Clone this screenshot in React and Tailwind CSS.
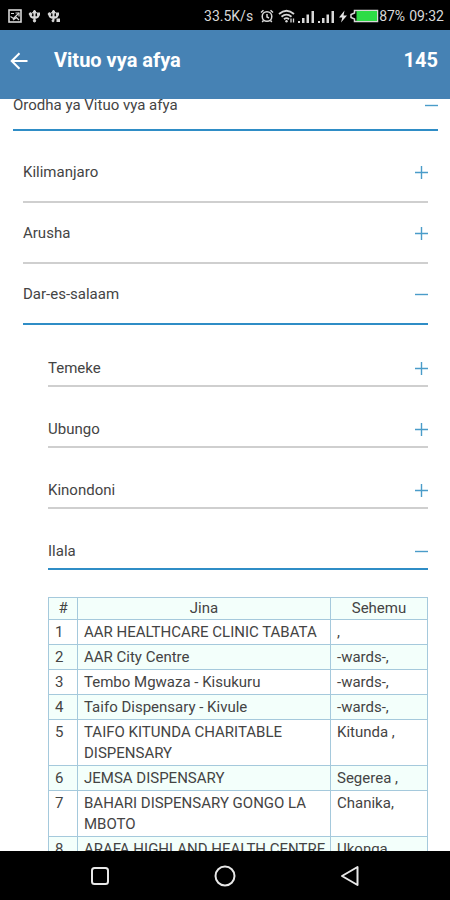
import { useState } from 'react';

const REGIONS = [
  { name: 'Kilimanjaro', districts: [] },
  { name: 'Arusha', districts: [] },
  {
    name: 'Dar-es-salaam',
    districts: [
      { name: 'Temeke', facilities: [] },
      { name: 'Ubungo', facilities: [] },
      { name: 'Kinondoni', facilities: [] },
      {
        name: 'Ilala',
        facilities: [
          { name: 'AAR HEALTHCARE CLINIC TABATA', area: ',' },
          { name: 'AAR City Centre', area: '-wards-,' },
          { name: 'Tembo Mgwaza - Kisukuru', area: '-wards-,' },
          { name: 'Taifo Dispensary - Kivule', area: '-wards-,' },
          { name: 'TAIFO KITUNDA CHARITABLE DISPENSARY', area: 'Kitunda ,' },
          { name: 'JEMSA DISPENSARY', area: 'Segerea ,' },
          { name: 'BAHARI DISPENSARY GONGO LA MBOTO', area: 'Chanika,' },
          { name: 'ARAFA HIGHLAND HEALTH CENTRE', area: 'Ukonga' },
        ],
      },
    ],
  },
];

function ScreenshotIcon() {
  return (
    <svg width="14" height="14" viewBox="0 0 14 14" fill="none" stroke="#d8d8d8">
      <rect x="1" y="1" width="12" height="12" strokeWidth="1.6" />
      <path d="M3 4.500h3M7.500 4H11v3.500" strokeWidth="1.200" />
      <path d="M2.500 7.500l3 2L11 4M5 11l3.500-2.500L11 11" strokeWidth="1.200" />
    </svg>
  );
}

function UsbIcon() {
  return (
    <svg width="13" height="14" viewBox="0 0 13 14" fill="#d8d8d8" stroke="#d8d8d8">
      <path d="M6.500 3v8M2.500 5v1Q2.500 8.500 6.500 9Q10.500 8.500 10.500 6V5" fill="none" strokeWidth="2" />
      <path d="M6.500 1L4.500 4h4z" />
      <circle cx="2.500" cy="5" r="1.300" />
      <rect x="9.500" y="4" width="2" height="2" />
      <circle cx="6.500" cy="11.800" r="1.200" />
    </svg>
  );
}

function UsbDebugIcon() {
  return (
    <svg width="14" height="14" viewBox="0 0 14 14" fill="#d8d8d8" stroke="#d8d8d8">
      <path d="M6.500 3v8M2.500 5v1Q2.500 8.500 6.500 9Q10.500 8.500 10.500 6V5" fill="none" strokeWidth="2" />
      <path d="M6.500 1L4.500 4h4z" />
      <circle cx="2.500" cy="5" r="1.300" />
      <rect x="9.500" y="4" width="2" height="2" />
      <circle cx="6" cy="11.800" r="1" />
      <rect x="10" y="10" width="2.500" height="2.500" />
    </svg>
  );
}

function AlarmIcon() {
  return (
    <svg width="14" height="14" viewBox="0 0 14 14" fill="none" stroke="#d8d8d8" strokeWidth="1.500">
      <circle cx="7" cy="7.500" r="4.800" />
      <path d="M7 5v3l2 1M1 3.500L3.500 1.200M13 3.500l-2.500-2.300M3.500 11.500L2.200 13M10.500 11.500l1.300 1.500" />
    </svg>
  );
}

function WifiIcon() {
  return (
    <svg width="18" height="14" viewBox="0 0 18 14" fill="none" stroke="#d8d8d8" strokeWidth="1.800">
      <path d="M1 5Q8.500-1.500 16 5M3.500 7.700q5-4.200 10 0M6 10.200q2.500-2.200 5 0" />
      <circle cx="8.500" cy="12.200" r="1.200" fill="#d8d8d8" stroke="none" />
      <path d="M13 9.500v4M15.500 9.500v4" strokeWidth="1.300" />
    </svg>
  );
}

function SignalIcon() {
  return (
    <svg width="17" height="13" viewBox="0 0 17 13" fill="#d8d8d8">
      <path d="M0 11h2v2H0zM4 8h2.500v5H4zM8.500 4.500H11V13H8.500zM13.500 1H16v12h-2.500z" />
    </svg>
  );
}

function BoltIcon() {
  return (
    <svg width="8" height="13" viewBox="0 0 8 13" fill="#e6e6e6">
      <path d="M5.500 0.500L0 7.500h3.300L2 12.500 8 5.500H4.500z" />
    </svg>
  );
}

function BatteryIcon() {
  return (
    <svg width="30" height="14" viewBox="0 0 30 14">
      <path d="M5.500 1.500h23v11h-23V10L2 8.500v-3L5.500 4z" fill="none" stroke="#d8d8d8" strokeWidth="1.500" />
      <rect x="7.500" y="2" width="20.500" height="10" fill="#2edc47" />
    </svg>
  );
}

function StatusBar() {
  return (
    <div className="flex h-[30px] shrink-0 items-center justify-between bg-black pt-0.5 pr-1.5 pl-2 text-[14px] text-[#d8d8d8]">
      <div className="flex items-center gap-[6px]">
        <ScreenshotIcon />
        <UsbIcon />
        <UsbDebugIcon />
      </div>
      <div className="flex items-center">
        <span className="mr-[7px]">33.5K/s</span>
        <AlarmIcon />
        <span className="w-1" />
        <WifiIcon />
        <span className="w-0.5" />
        <SignalIcon />
        <span className="w-[3px]" />
        <SignalIcon />
        <span className="w-1" />
        <BoltIcon />
        <span className="w-0.5" />
        <BatteryIcon />
        <span>87%</span>
        <span className="ml-1">09:32</span>
      </div>
    </div>
  );
}

function Header({ count }) {
  return (
    <header className="flex h-[69px] shrink-0 items-center bg-[#4682b4] pr-3 pb-2.5 pl-2.5 text-xl font-bold text-white">
      <button type="button" aria-label="Rudi" className="mr-[26px] cursor-pointer pt-0.5">
        <svg width="18" height="18" viewBox="0 0 18 18" fill="none" stroke="currentColor" strokeWidth="2">
          <path d="M17.500 9H2M9.500 1.200L1.700 9l7.800 7.800" />
        </svg>
      </button>
      <h1 className="flex-1">Vituo vya afya</h1>
      <span>{count}</span>
    </header>
  );
}

function ToggleIcon({ open }) {
  return (
    <svg width="13" height="13" viewBox="0 0 13 13" stroke="#4a9cc9" strokeWidth="1.400">
      <path d={open ? 'M0 6.500h13' : 'M0 6.500h13M6.500 0v13'} />
    </svg>
  );
}

const ROW_SPACING = {
  root: 'pt-5 pb-3.5',
  region: 'pt-5 pb-[19px]',
  district: 'pt-8 pb-[7px]',
};

function AccordionItem({ label, level, defaultOpen = false, children }) {
  const [open, setOpen] = useState(defaultOpen);

  return (
    <section>
      <button
        type="button"
        aria-expanded={open}
        onClick={() => setOpen(!open)}
        className={`flex w-full cursor-pointer items-center justify-between border-b-2 text-left text-[15px] leading-5 ${ROW_SPACING[level]} ${
          open ? 'border-[#2f8dc6]' : 'border-[#cfcfcf]'
        }`}
      >
        <span>{label}</span>
        <ToggleIcon open={open} />
      </button>
      {open && children}
    </section>
  );
}

function FacilityTable({ facilities }) {
  return (
    <table className="mt-[27px] w-full table-fixed border-collapse text-[15px] leading-[21px]">
      <colgroup>
        <col className="w-[29px]" />
        <col />
        <col className="w-[97px]" />
      </colgroup>
      <thead>
        <tr className="bg-[#f3fffb]">
          <th className="border border-[#a5c9dc] p-0 font-normal">#</th>
          <th className="border border-[#a5c9dc] p-0 font-normal">Jina</th>
          <th className="border border-[#a5c9dc] p-0 font-normal">Sehemu</th>
        </tr>
      </thead>
      <tbody>
        {facilities.map((facility, index) => (
          <tr key={facility.name} className="align-top even:bg-[#f3fffb]">
            <td className="border border-[#a5c9dc] pt-0.5 pb-px pl-1.5">{index + 1}</td>
            <td className="border border-[#a5c9dc] pt-0.5 pb-px pl-1.5">{facility.name}</td>
            <td className="border border-[#a5c9dc] pt-0.5 pb-px pl-1.5">{facility.area}</td>
          </tr>
        ))}
      </tbody>
    </table>
  );
}

function NavBar() {
  return (
    <nav className="flex h-[49px] shrink-0 items-center justify-center gap-[103px] bg-black text-[#e8e8e8]">
      <button type="button" aria-label="Programu za karibuni" className="cursor-pointer">
        <svg width="22" height="22" viewBox="0 0 22 22" fill="none" stroke="currentColor" strokeWidth="2">
          <rect x="3" y="3" width="16" height="16" rx="2.500" />
        </svg>
      </button>
      <button type="button" aria-label="Nyumbani" className="cursor-pointer">
        <svg width="22" height="22" viewBox="0 0 22 22" fill="none" stroke="currentColor" strokeWidth="2">
          <circle cx="11" cy="11" r="9.500" />
        </svg>
      </button>
      <button type="button" aria-label="Nyuma" className="cursor-pointer">
        <svg width="22" height="22" viewBox="0 0 22 22" fill="none" stroke="currentColor" strokeWidth="2" strokeLinejoin="round">
          <path d="M18.500 2v18L3 11z" />
        </svg>
      </button>
    </nav>
  );
}

export default function App() {
  return (
    <div className="flex h-screen flex-col overflow-hidden bg-white font-['Roboto',sans-serif] text-[#444]">
      <StatusBar />
      <Header count={145} />
      <main className="min-h-0 flex-1 overflow-hidden">
        <div className="-mt-6 pr-3 pl-[13px]">
          <AccordionItem label="Orodha ya Vituo vya afya" level="root" defaultOpen>
            <div className="px-2.5 pt-[11px]">
              {REGIONS.map((region) => (
                <AccordionItem
                  key={region.name}
                  label={region.name}
                  level="region"
                  defaultOpen={region.districts.length > 0}
                >
                  <div className="pt-px pl-[25px]">
                    {region.districts.map((district) => (
                      <AccordionItem
                        key={district.name}
                        label={district.name}
                        level="district"
                        defaultOpen={district.facilities.length > 0}
                      >
                        <FacilityTable facilities={district.facilities} />
                      </AccordionItem>
                    ))}
                  </div>
                </AccordionItem>
              ))}
            </div>
          </AccordionItem>
        </div>
      </main>
      <NavBar />
    </div>
  );
}
